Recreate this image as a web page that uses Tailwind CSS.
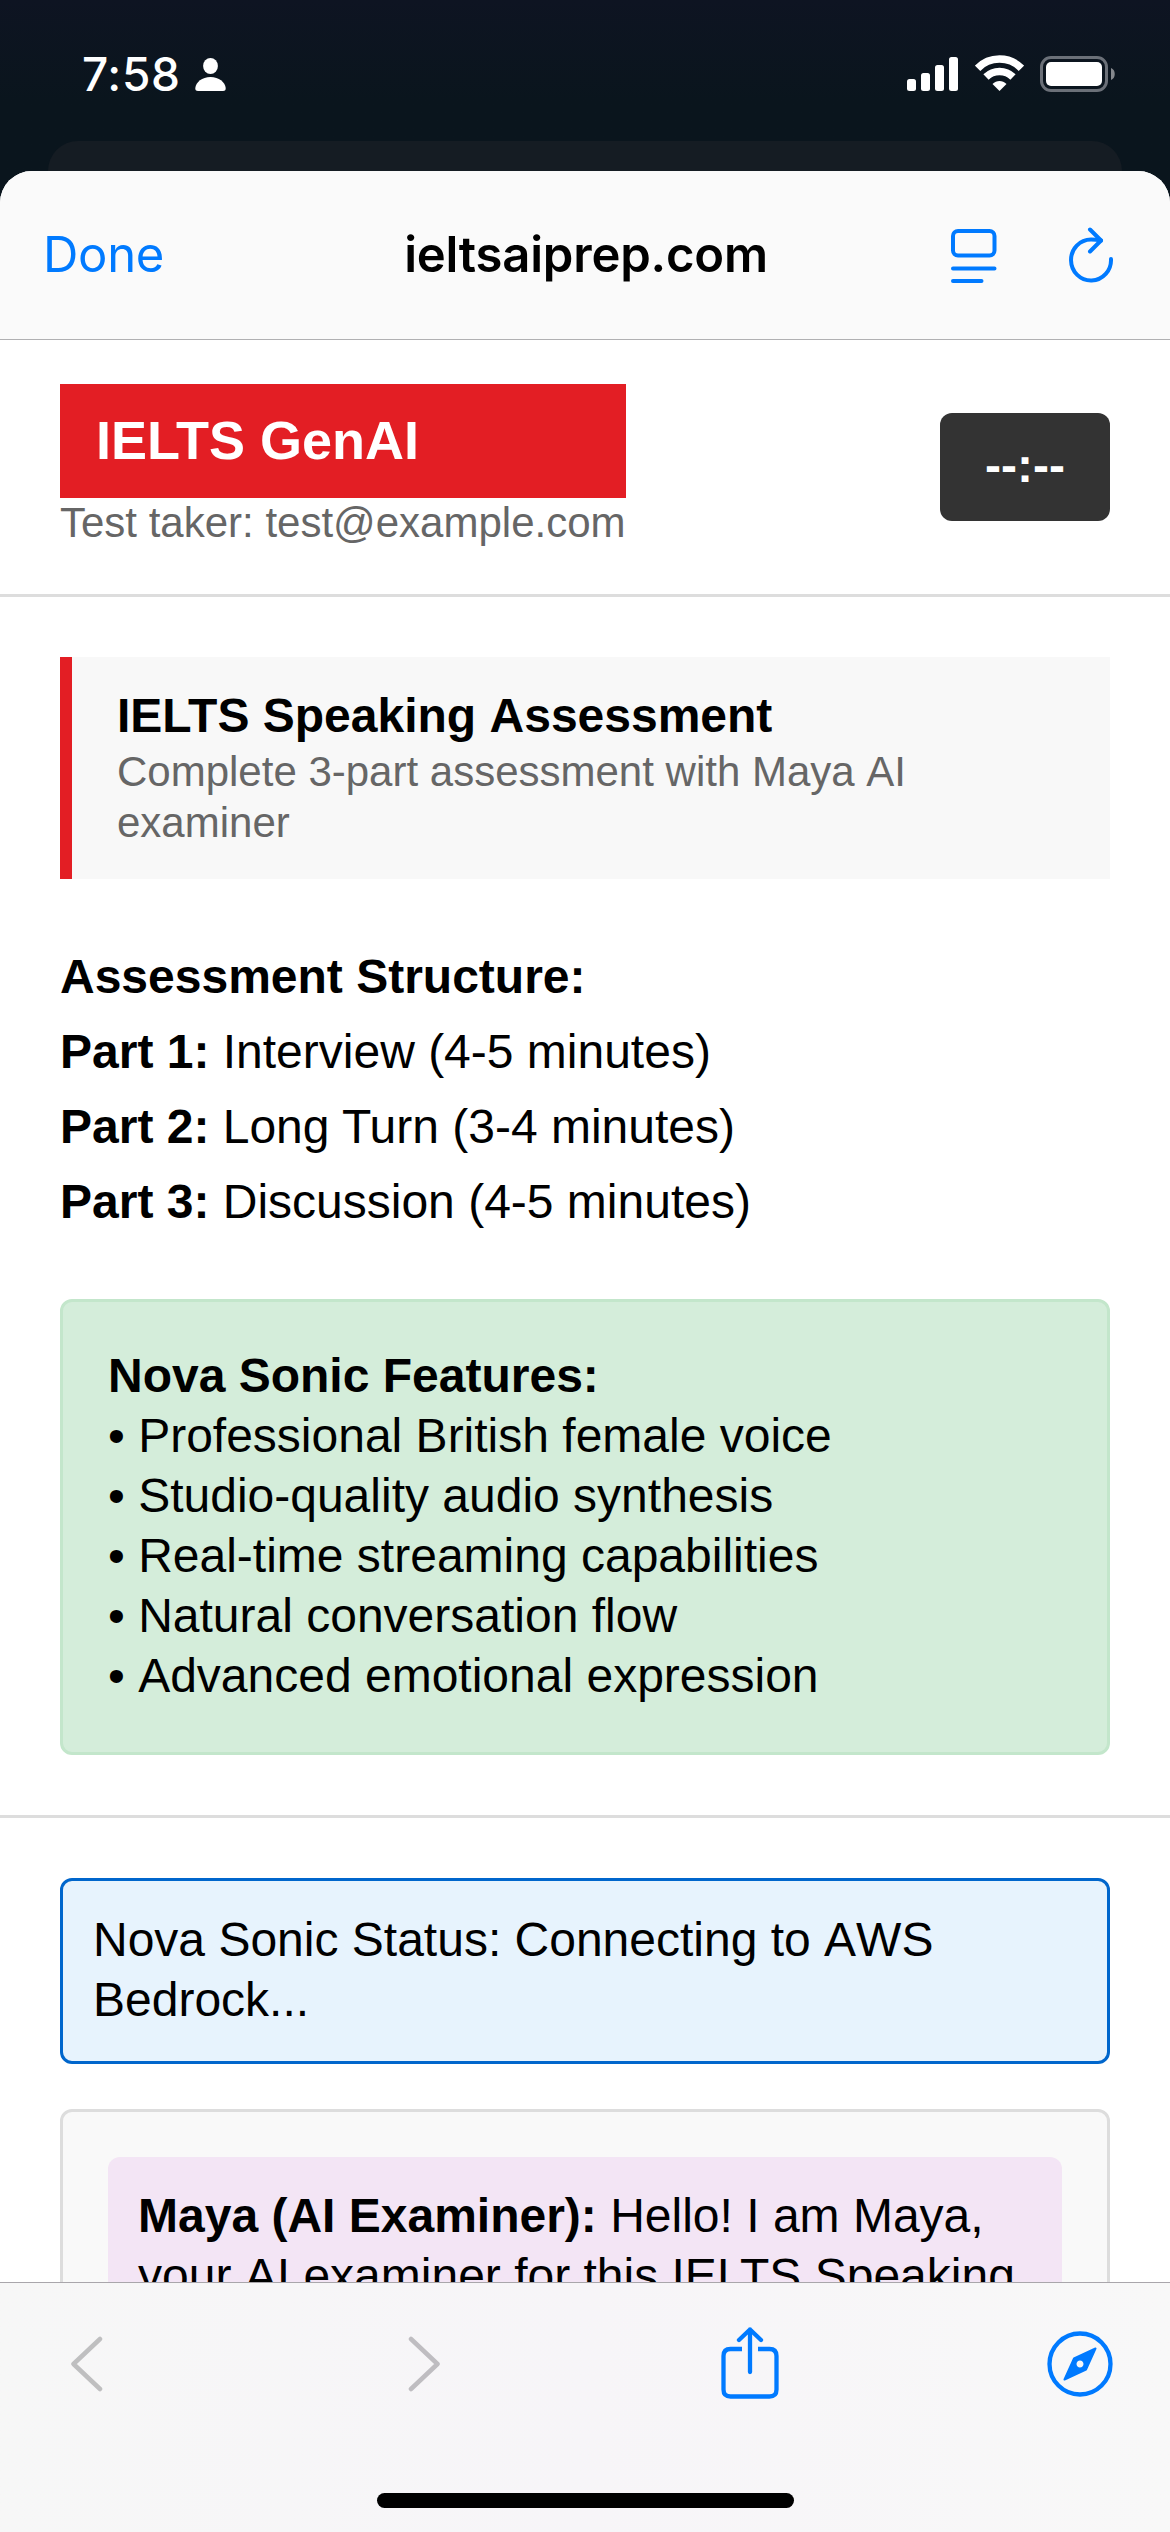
<!DOCTYPE html>
<html lang="en">
<head>
<meta charset="utf-8">
<title>IELTS GenAI</title>
<script src="https://cdn.jsdelivr.net/npm/@tailwindcss/browser@4"></script>
</head>
<body class="w-[1170px] h-[2532px] overflow-hidden bg-[#0a141c]">
<div class="flex h-[2532px] w-[1170px] flex-col overflow-hidden bg-linear-to-b from-[#0e1422] from-0% via-[#0a151d] via-[4%] to-[#0a151d] font-['Liberation_Sans',Arial,sans-serif] text-black">

  <!-- Status bar -->
  <div class="flex h-[141px] shrink-0 justify-between pl-[82px] pr-[54px]">
    <div class="flex h-[91px] items-end gap-[14px] font-['Inter',sans-serif] text-white">
      <span class="w-[99px] text-[46px] leading-[54px] font-medium tracking-[0.6px] -mb-[10px]">7:58</span>
      <svg class="h-[33px] w-[31px]" viewBox="0 0 31 33" fill="#fff"><ellipse cx="15.500" cy="8" rx="7.400" ry="8"/><path d="M3 33Q0 33 0.300 30C1 24 7 19 15.500 19S30 24 30.700 30Q31 33 28 33Z"/></svg>
    </div>
    <div class="flex h-[93px] items-end gap-[16px]">
      <svg class="mb-[2px] h-[34px] w-[52px]" viewBox="0 0 52 34" fill="#fff"><rect y="22" width="9" height="12" rx="2.500"/><rect x="14" y="16" width="9" height="18" rx="2.500"/><rect x="28" y="8" width="9" height="26" rx="2.500"/><rect x="42" y="0" width="9" height="34" rx="2.500"/></svg>
      <svg class="mb-[2px] h-[36px] w-[49px]" viewBox="0 0 49 36"><g fill="none" stroke="#fff" stroke-width="7.500"><path d="M2.600 13.300C14.500 1 34.500 1 46.400 13.300"/><path d="M11 22C18.500 14.600 30.500 14.600 38 22"/></g><path d="M24.500 36 17.500 29C21.500 25 27.500 25 31.500 29Z" fill="#fff"/></svg>
      <svg class="h-[37px] w-[76px]" viewBox="0 0 76 37"><rect x="1.500" y="1.500" width="65" height="33" rx="9.500" fill="none" stroke="#6b7078" stroke-width="3"/><rect x="6" y="6" width="56" height="24" rx="5" fill="#fff"/><path d="M71 12c5 1.500 5 10.500 0 12z" fill="#85888d"/></svg>
    </div>
  </div>

  <!-- Card stacked behind the sheet -->
  <div class="mx-[48px] h-[60px] shrink-0 rounded-t-[30px] bg-[#151c23]"></div>

  <!-- Browser sheet -->
  <div class="-mt-[30px] flex min-h-0 flex-1 flex-col overflow-hidden rounded-t-[32px] bg-white">
    <nav class="flex h-[169px] shrink-0 items-center justify-between border-b border-[#b0b0b2] bg-[#fafafa] pl-[43px] pr-[56px] font-['Inter',sans-serif]">
      <span class="w-[160px] text-[49px] tracking-[-0.3px] text-[#007aff]">Done</span>
      <span class="ml-[18px] text-[49px] font-semibold tracking-[-0.200px]">ieltsaiprep.com</span>
      <div class="flex items-center gap-[71px]">
        <svg class="mt-[2px] h-[54px] w-[46px]" viewBox="0 0 46 54" fill="none" stroke="#007aff" stroke-width="4" stroke-linecap="round"><rect x="2" y="2" width="41.500" height="24.500" rx="5"/><path d="M2 39.500H43.500M2 52H30.500"/></svg>
        <svg class="h-[56px] w-[46px]" viewBox="0 0 46 56" fill="none" stroke="#007aff" stroke-width="4" stroke-linecap="round" stroke-linejoin="round"><path d="M43 32A20 20.500 0 1 1 23 12.500Q28 12.500 33 13.500"/><path d="M22 2.500 33 13.500 22 24.500"/></svg>
      </div>
    </nav>

    <main class="min-h-0 flex-1 overflow-hidden text-[48px] leading-[60px]">
      <header class="flex h-[257px] items-center justify-between border-b-[3px] border-[#ddd] px-[60px]">
        <div class="w-[566px] pb-[3px]">
          <div class="h-[114px] bg-[#e31e24] px-[36px] pt-[25px] text-[54px] leading-[62px] font-bold text-white">IELTS GenAI</div>
          <div class="pt-[1px] text-[42px] leading-[48px] whitespace-nowrap text-[#666]">Test taker: test@example.com</div>
        </div>
        <div class="h-[108px] w-[170px] rounded-[12px] bg-[#333] pt-[23px] text-center font-bold text-white">--:--</div>
      </header>

      <section class="border-b-[3px] border-[#ddd] p-[60px]">
        <div class="h-[222px] border-l-[12px] border-[#e31e24] bg-[#f8f8f8] px-[45px] pt-[28px]">
          <h1 class="leading-[61px] font-bold">IELTS Speaking<span class="[font-kerning:none]"> A</span>ssessment</h1>
          <p class="text-[42px] leading-[51px] text-[#666]">Complete 3-part assessment with Maya<span class="[font-kerning:none]"> AI</span> examiner</p>
        </div>
        <div class="mt-[60px] h-[360px] leading-[75px]">
          <p class="font-bold">Assessment Structure:</p>
          <p><b>Part 1:</b> Interview (4-5 minutes)</p>
          <p><b>Part 2:</b> Long Turn (3-4 minutes)</p>
          <p><b>Part 3:</b> Discussion (4-5 minutes)</p>
        </div>
        <div class="h-[456px] rounded-[12px] border-[3px] border-[#c3e6cb] bg-[#d4edda] px-[45px] pt-[44px]">
          <p class="font-bold">Nova Sonic Features:</p>
          <p>• Professional British female voice</p>
          <p>• Studio-quality audio synthesis</p>
          <p>• Real-time streaming capabilities</p>
          <p>• Natural conversation flow</p>
          <p class="[font-kerning:none]">• Advanced emotional expression</p>
        </div>
      </section>

      <section class="px-[60px] pt-[60px]">
        <div class="h-[186px] rounded-[12px] border-[3px] border-[#0066cc] bg-[#e7f3fd] px-[30px] pt-[29px]">Nova Sonic Status: Connecting to<span class="[font-kerning:none]"> AWS</span> Bedrock...</div>
        <div class="mt-[45px] h-[600px] rounded-[12px] border-[3px] border-[#ddd] bg-[#f9f9f9] p-[45px]">
          <div class="h-[400px] rounded-[12px] bg-[#f3e5f5] px-[30px] pt-[29px]"><b>Maya (AI Examiner):</b> Hello! I am Maya, your<span class="[font-kerning:none]"> AI</span> examiner for this IELTS Speaking assessment.</div>
        </div>
      </section>
    </main>

    <!-- Bottom toolbar -->
    <footer class="flex h-[250px] shrink-0 flex-col items-center justify-between border-t border-[#a9a6ab] bg-linear-to-r from-[#f7f7f7] via-[#f7f5f8] to-[#f8f8f8] pb-[24px]">
      <div class="flex w-full items-center pt-[43px] pl-[70px]">
        <svg class="mr-[305px] h-[76px] w-[33px]" viewBox="0 0 33 76" fill="none" stroke="#bfbfc0" stroke-width="4.500" stroke-linecap="round" stroke-linejoin="round"><path d="M30 13 3.500 38 30 63"/></svg>
        <svg class="mr-[280px] h-[76px] w-[33px]" viewBox="0 0 33 76" fill="none" stroke="#bfbdc1" stroke-width="4.500" stroke-linecap="round" stroke-linejoin="round"><path d="M3 13 29.500 38 3 63"/></svg>
        <svg class="mr-[268px] h-[76px] w-[58px]" viewBox="0 0 58 76" fill="none" stroke="#007aff" stroke-width="4.300" stroke-linejoin="round"><path d="M21 23H9.500Q2.500 23 2.500 30V63.500Q2.500 70.500 9.500 70.500H48.500Q55.500 70.500 55.500 63.500V30Q55.500 23 48.500 23H37"/><path d="M29 46V3.500M18 14 29 3.500 40 14" stroke-linecap="round"/></svg>
        <svg class="h-[76px] w-[66px]" viewBox="0 0 66 76"><circle cx="33" cy="38" r="30.500" fill="none" stroke="#007aff" stroke-width="4.300"/><path fill="#007aff" stroke="#007aff" stroke-width="2" stroke-linejoin="round" fill-rule="evenodd" d="M48.500 22.500 39 43.500 17.500 53.500 27 32.500ZM37.500 38a4.500 4.500 0 1 0-9 0a4.500 4.500 0 1 0 9 0Z"/></svg>
      </div>
      <div class="h-[15px] w-[417px] rounded-full bg-black"></div>
    </footer>
  </div>
</div>
</body>
</html>
